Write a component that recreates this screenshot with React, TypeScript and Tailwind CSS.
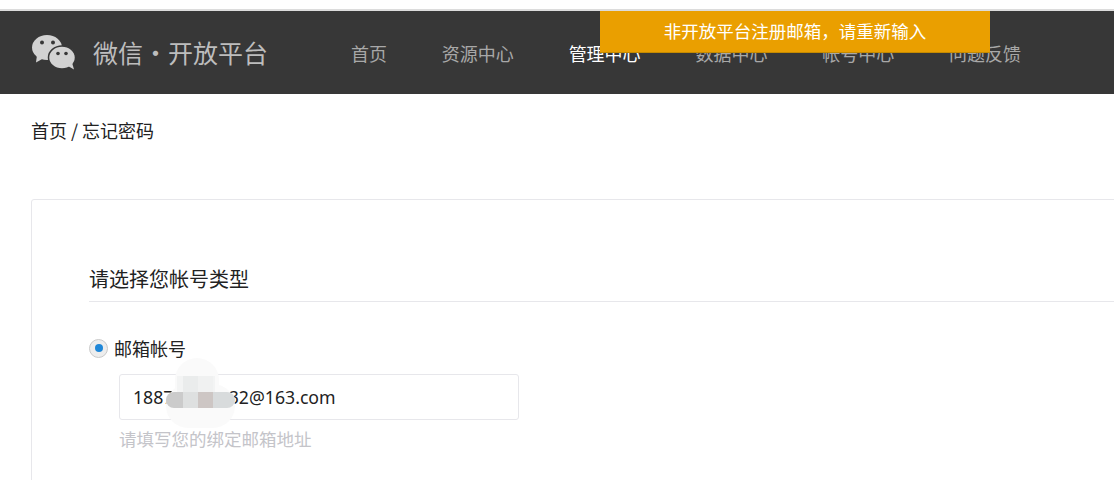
const cjk = "font-['Noto_Sans_CJK_SC','Microsoft_YaHei',sans-serif]";

function WechatLogo() {
  return (
    <svg width="46" height="37" viewBox="0 0 46 37" fill="#d2d2d2">
      <ellipse cx="16" cy="13.500" rx="15" ry="12.500" />
      <path d="M6 21l-1 7.500 8-4.500z" />
      <ellipse cx="31" cy="23.500" rx="13.500" ry="11.500" stroke="#373737" strokeWidth="1.500" />
      <path d="M37 32l6 3.500-2-7z" />
      <circle cx="11" cy="8.500" r="2" fill="#373737" />
      <circle cx="22" cy="8.500" r="2" fill="#373737" />
      <circle cx="27" cy="19.500" r="1.800" fill="#373737" />
      <circle cx="35" cy="19.500" r="1.800" fill="#373737" />
    </svg>
  );
}

function RedactPatch() {
  return (
    <div className="absolute left-[166px] top-[358px] h-[70px] w-[69px]">
      <div className="absolute left-[9px] top-0 h-[56px] w-[44px] rounded-[22px] bg-[#fafafa]" />
      <div className="absolute left-0 top-[26px] h-[44px] w-[69px] rounded-[22px] bg-[#fafafa]" />
      <div className="absolute left-[11px] top-[18px] flex h-[16px] w-[38px]">
        <div className="w-[6px] bg-[#f3f4f4]" />
        <div className="w-[15px] bg-[#eaecec]" />
        <div className="w-[15px] bg-[#f0f1f1]" />
        <div className="w-[2px] bg-[#f3f4f4]" />
      </div>
      <div className="absolute left-0 top-[34px] flex h-[16px] w-[69px]">
        <div className="w-[17px] rounded-l-[8px] bg-[#cbcbcb]" />
        <div className="w-[15px] bg-[#dee0e0]" />
        <div className="w-[15px] bg-[#cdc6c4]" />
        <div className="w-[22px] rounded-r-[8px] bg-[#d8dbdc]" />
      </div>
    </div>
  );
}

export default function App() {
  const nav = ["首页", "资源中心", "管理中心", "数据中心", "帐号中心", "问题反馈"];

  return (
    <div className={`relative h-[480px] w-[1114px] overflow-hidden bg-white ${cjk}`}>
      <div className="h-[9px] bg-white" />
      <div className="h-[2px] bg-[#dcdcdc]" />
      <header className="flex h-[83px] items-center bg-[#373737] pl-[31px]">
        <WechatLogo />
        <div className="ml-[16px] flex text-[25px] leading-none text-[#bdbdbd]">
          <span>微信</span>
          <span className="w-[25px] text-center">·</span>
          <span>开放平台</span>
        </div>
        <nav className="ml-[83px] flex gap-[54.8px] pt-[2px] text-[18px]">
          {nav.map((item) => (
            <span key={item} className={item === "管理中心" ? "text-white" : "text-[#a8a8a8]"}>
              {item}
            </span>
          ))}
        </nav>
      </header>

      <div className="absolute left-[600px] top-[11px] flex h-[42px] w-[390px] items-center justify-center border-b border-[#c48a00] bg-[#ea9f00] text-[17.5px] text-white">
        非开放平台注册邮箱，请重新输入
      </div>

      <div className="pl-[31px] pt-[23px] text-[18px] leading-[26px] text-[#222]">首页 / 忘记密码</div>

      <section className="ml-[31px] mr-[-10px] mt-[56px] h-[300px] rounded-tl-[3px] border border-[#e7e7eb] pl-[57px] pt-[65px]">
        <h2 className="border-b border-[#e7e7eb] pb-[8px] text-[20px] font-normal leading-[28px] text-[#222]">请选择您帐号类型</h2>
        <label className="mt-[33px] flex h-[26px] items-center gap-[6px] text-[18px] text-[#222]">
          <span className="flex h-[19px] w-[19px] items-center justify-center rounded-full border border-[#c9c9c9] bg-[#ededed]">
            <span className="h-[8px] w-[8px] rounded-full bg-[#1f87d8]" />
          </span>
          邮箱帐号
        </label>
        <div className="ml-[30px] mt-[13px] flex h-[46px] w-[400px] items-center rounded-[3px] border border-[#e7e7eb] pl-[13px] font-['Noto_Sans',sans-serif] text-[17.7px] text-[#222]">
          1887&nbsp;&nbsp;&nbsp;&nbsp;&nbsp;&nbsp;&nbsp;&nbsp;&nbsp;&nbsp;&nbsp;&nbsp;32@163.com
        </div>
        <p className="ml-[30px] mt-[6px] text-[17.5px] leading-[26px] text-[#c4c4c9]">请填写您的绑定邮箱地址</p>
      </section>

      <RedactPatch />
    </div>
  );
}
